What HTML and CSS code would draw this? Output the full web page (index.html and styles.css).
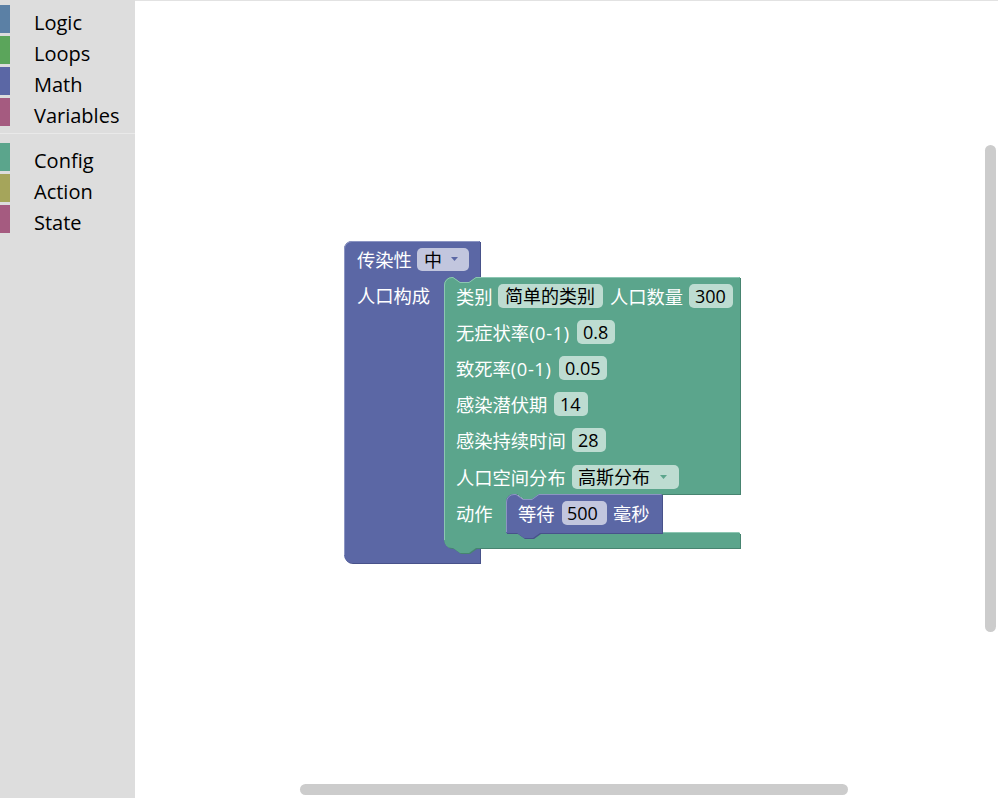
FILE: index.html
```html
<!DOCTYPE html>
<html>
<head>
<meta charset="utf-8">
<link rel="stylesheet" href="styles.css">
</head>
<body>
<div class="app">
  <aside class="toolbox">
    <div class="cat cat-logic">Logic</div>
    <div class="cat cat-loops">Loops</div>
    <div class="cat cat-math">Math</div>
    <div class="cat cat-vars">Variables</div>
    <div class="sep"></div>
    <div class="cat cat-config">Config</div>
    <div class="cat cat-action">Action</div>
    <div class="cat cat-state">State</div>
  </aside>
  <main class="workspace">
    <svg class="canvas" width="863" height="798" viewBox="135 0 863 798">
      <!-- outer purple block -->
      <g class="block-purple">
        <path class="shadow" transform="translate(1,1)" d="M344,249 a8,8 0 0 1 8,-8 H480 V277 H476 l-7,5 h-9 l-7,-5 H452 a8,8 0 0 0 -8,8 V540 a8,8 0 0 0 8,8 H480 V563 H352 a8,8 0 0 1 -8,-8 Z"/>
        <path class="fill" d="M344,249 a8,8 0 0 1 8,-8 H480 V277 H476 l-7,5 h-9 l-7,-5 H452 a8,8 0 0 0 -8,8 V540 a8,8 0 0 0 8,8 H480 V563 H352 a8,8 0 0 1 -8,-8 Z"/>
        <path class="light" d="M344.5,555 V249 a7.5,7.5 0 0 1 7.5,-7.5 H479.5"/>
        <text class="lbl" x="357" y="259">传染性</text>
        <rect class="fld-p" x="417" y="248" width="52" height="23" rx="5"/>
        <text class="val" x="424" y="259.5">中</text>
        <path class="arrow" d="M451,257 h7 l-3.5,4 Z"/>
        <text class="lbl" x="357" y="295">人口构成</text>
      </g>
      <!-- green config block -->
      <g class="block-green">
        <path class="shadow" transform="translate(1,1)" d="M444,285 a8,8 0 0 1 8,-8 H453 l7,5 h9 l7,-5 H740 V494 H540 l-7,5 h-9 l-7,-5 H514 a8,8 0 0 0 -8,8 V525 a8,8 0 0 0 8,8 H740 V548 H476 l-7,5 h-9 l-7,-5 H452 a8,8 0 0 1 -8,-8 Z"/>
        <path class="fill" d="M444,285 a8,8 0 0 1 8,-8 H453 l7,5 h9 l7,-5 H740 V494 H540 l-7,5 h-9 l-7,-5 H514 a8,8 0 0 0 -8,8 V525 a8,8 0 0 0 8,8 H740 V548 H476 l-7,5 h-9 l-7,-5 H452 a8,8 0 0 1 -8,-8 Z"/>
        <path class="light" d="M444.5,540 V285 a7.5,7.5 0 0 1 7.5,-7.5 H453 l7,5 h9 l7,-5 H739.5"/>
        <path class="light" d="M506.5,502 V525 a7.5,7.5 0 0 0 7.5,7.5 H739.5"/>

        <text class="lbl" x="456" y="296">类别</text>
        <rect class="fld-g" x="498" y="284" width="105" height="24" rx="5"/>
        <text class="val" x="505" y="296">简单的类别</text>
        <text class="lbl" x="610" y="296">人口数量</text>
        <rect class="fld-g" x="689" y="284" width="44" height="24" rx="5"/>
        <text class="val" x="695" y="296">300</text>

        <text class="lbl" x="456" y="332">无症状率<tspan class="lat">(0-1)</tspan></text>
        <rect class="fld-g" x="577" y="320" width="38" height="24" rx="5"/>
        <text class="val" x="583" y="332">0.8</text>

        <text class="lbl" x="456" y="368">致死率<tspan class="lat">(0-1)</tspan></text>
        <rect class="fld-g" x="559" y="356" width="48" height="24" rx="5"/>
        <text class="val" x="565" y="368">0.05</text>

        <text class="lbl" x="456" y="404">感染潜伏期</text>
        <rect class="fld-g" x="554" y="392" width="34" height="24" rx="5"/>
        <text class="val" x="560" y="404">14</text>

        <text class="lbl" x="456" y="440">感染持续时间</text>
        <rect class="fld-g" x="572" y="428" width="34" height="24" rx="5"/>
        <text class="val" x="578" y="440">28</text>

        <text class="lbl" x="456" y="477">人口空间分布</text>
        <rect class="fld-g" x="572" y="465" width="107" height="24" rx="5"/>
        <text class="val" x="578" y="477">高斯分布</text>
        <path class="arrow-g" d="M660,475 h7 l-3.5,4 Z"/>

        <text class="lbl" x="456" y="513">动作</text>
      </g>
      <!-- wait block -->
      <g class="block-purple">
        <path class="shadow" transform="translate(1,1)" d="M506,502 a8,8 0 0 1 8,-8 H516 l7,5 h9 l7,-5 H662 V533 H540 l-7,5 h-9 l-7,-5 H506 Z"/>
        <path class="fill" d="M506,502 a8,8 0 0 1 8,-8 H516 l7,5 h9 l7,-5 H662 V533 H540 l-7,5 h-9 l-7,-5 H506 Z"/>
        <path class="light" d="M506.5,532 V502 a7.5,7.5 0 0 1 7.5,-7.5 H516 l7,5 h9 l7,-5 H661.5"/>
        <text class="lbl" x="518" y="513">等待</text>
        <rect class="fld-p" x="562" y="501" width="45" height="24" rx="5"/>
        <text class="val" x="567" y="513">500</text>
        <text class="lbl" x="613" y="513">毫秒</text>
      </g>
    </svg>
    <div class="vscroll"></div>
    <div class="hscroll"></div>
  </main>
</div>
</body>
</html>
```
FILE: styles.css
```css
html, body {
  margin: 0;
  padding: 0;
  width: 998px;
  height: 798px;
  overflow: hidden;
  background: #fff;
}
.app {
  display: flex;
  width: 998px;
  height: 798px;
}
.toolbox {
  width: 135px;
  flex: 0 0 135px;
  height: 798px;
  background: #dddddd;
  padding-top: 5px;
  box-sizing: border-box;
  font-family: "Open Sans", "Noto Sans", sans-serif;
  font-size: 20px;
  color: #000;
}
.cat {
  height: 28px;
  box-sizing: border-box;
  margin-bottom: 3px;
  padding-top: 7px;
  padding-left: 24px;
  line-height: 21px;
  border-left: 10px solid #888;
  white-space: nowrap;
}
.cat-logic { border-left-color: #5b80a5; }
.cat-loops { border-left-color: #5ba55b; }
.cat-math { border-left-color: #5b67a5; }
.cat-vars { border-left-color: #a55b80; }
.cat-config { border-left-color: #5ba58c; }
.cat-action { border-left-color: #a5a55b; }
.cat-state { border-left-color: #a55b80; }
.sep {
  height: 0;
  border-bottom: 1px solid #e9e9e9;
  margin: 7px 0 9px 0;
}
.workspace {
  flex: 1 1 auto;
  position: relative;
  height: 798px;
  background: #fff;
  box-shadow: inset 0 1px 0 #e2e2e2;
}
.canvas {
  position: absolute;
  left: 0;
  top: 0;
  display: block;
}
.block-purple .fill { fill: #5b67a5; }
.block-purple .shadow { fill: #48528a; }
.block-purple .light { fill: none; stroke: #8c95c3; stroke-width: 1; }
.block-green .fill { fill: #5ba58c; }
.block-green .shadow { fill: #478470; }
.block-green .light { fill: none; stroke: #8cc6b2; stroke-width: 1; }
.lbl {
  fill: #fff;
  font-family: "Open Sans", "Noto Sans CJK SC", sans-serif;
  font-size: 18.3px;
  dominant-baseline: central;
}
.lat {
  letter-spacing: 0.6px;
}
.val {
  fill: #000;
  font-family: "Open Sans", "Noto Sans CJK SC", sans-serif;
  font-size: 18px;
  dominant-baseline: central;
}
.fld-p { fill: #c2c6de; }
.fld-g { fill: #bddcd1; }
.arrow { fill: #5b67a5; }
.arrow-g { fill: #5ba58c; }
.vscroll {
  position: absolute;
  left: 850px;
  top: 145px;
  width: 11px;
  height: 487px;
  border-radius: 6px;
  background: #cccccc;
}
.hscroll {
  position: absolute;
  left: 165px;
  top: 784px;
  width: 548px;
  height: 11px;
  border-radius: 6px;
  background: #cccccc;
}
```
